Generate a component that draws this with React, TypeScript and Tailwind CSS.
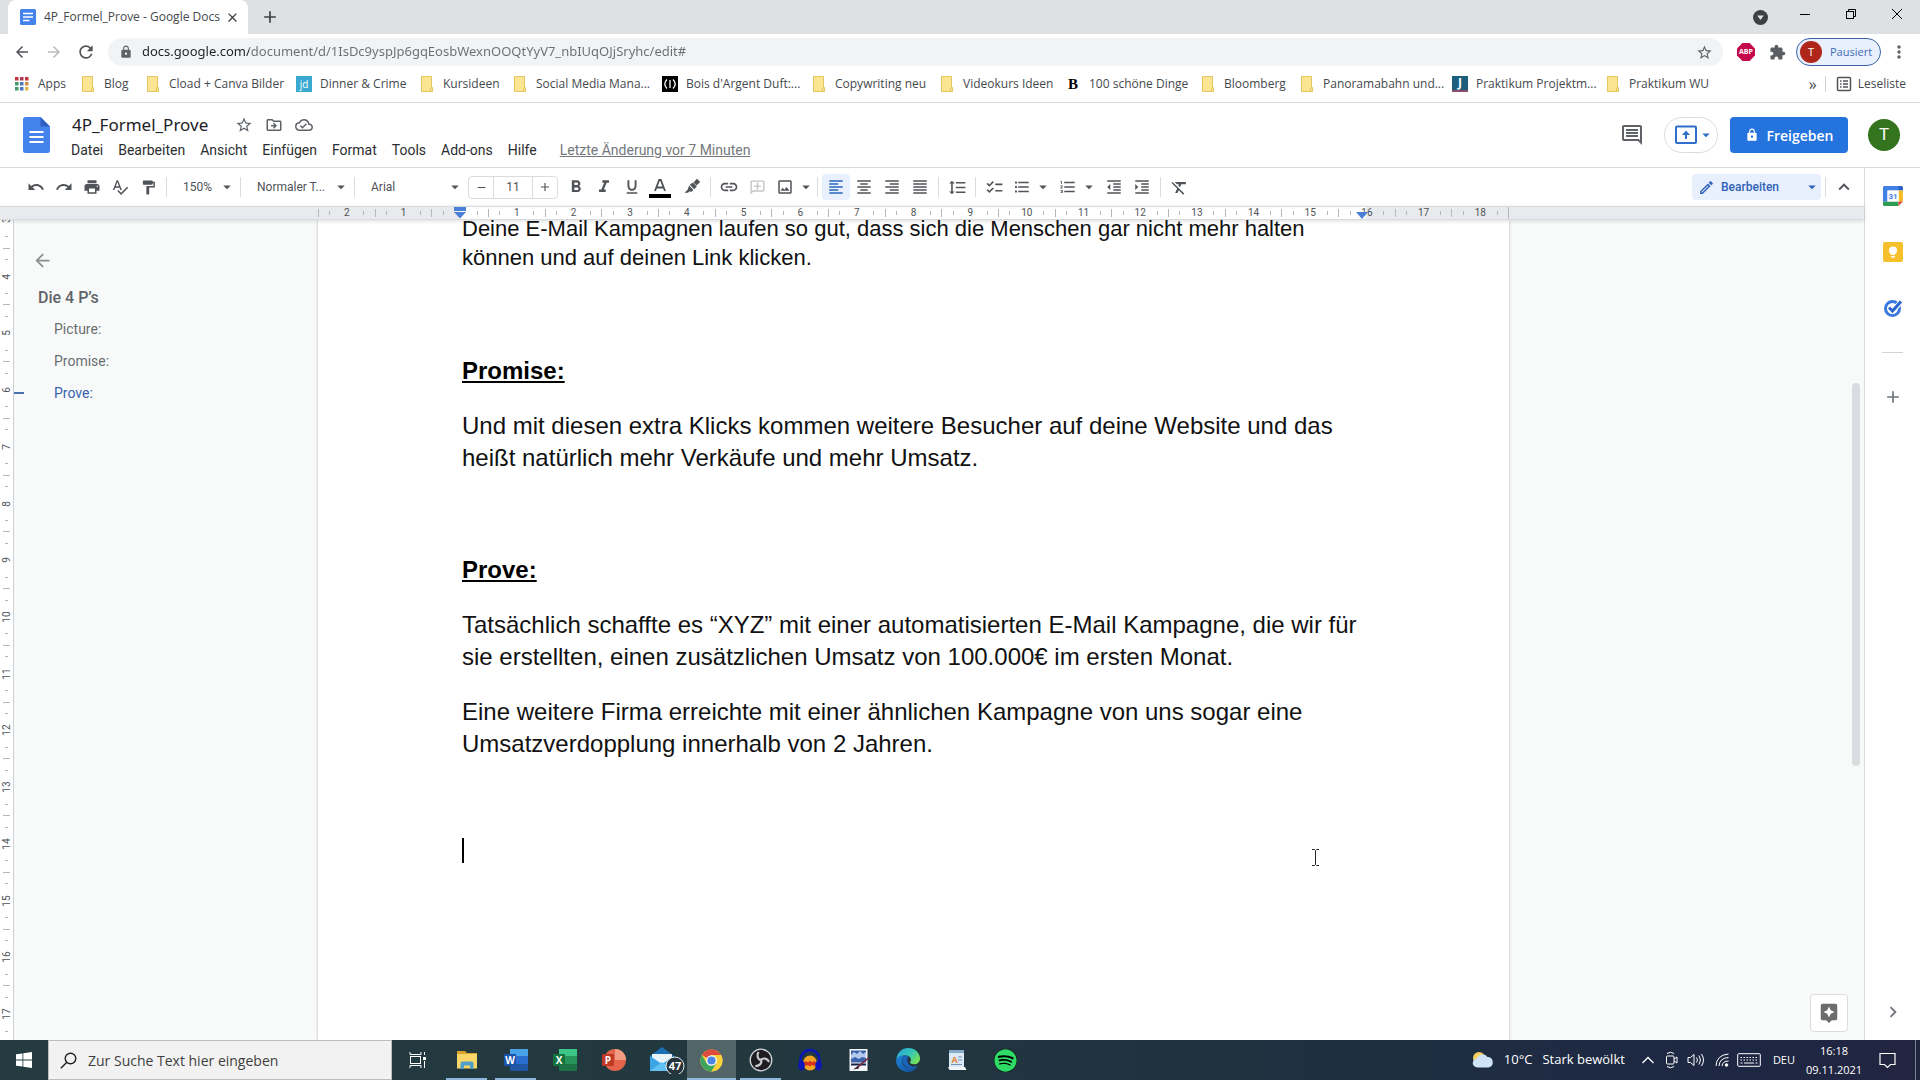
import React from "react";
import {
  MdAdd, MdArrowBack, MdArrowDropDown, MdArrowForward, MdAssistant, MdChecklist, MdChevronRight, MdClose,
  MdExtension, MdFormatAlignCenter, MdFormatAlignJustify, MdFormatAlignLeft, MdFormatAlignRight, MdFormatBold,
  MdFormatClear, MdFormatIndentDecrease, MdFormatIndentIncrease, MdFormatItalic, MdFormatLineSpacing,
  MdFormatListBulleted, MdFormatListNumbered, MdFormatPaint, MdFormatUnderlined, MdKeyboardArrowUp, MdLink,
  MdLock, MdMoreVert, MdOutlineAddComment, MdOutlineCloudDone, MdOutlineDriveFileMove, MdOutlineEdit,
  MdOutlineImage, MdOutlineInsertComment, MdPrint, MdRedo, MdRefresh, MdRemove, MdSpellcheck, MdStarBorder, MdUndo,
} from "react-icons/md";
import { FaSpotify } from "react-icons/fa";

type Kids = { children?: React.ReactNode };

/* ---------- browser frame ---------- */

function TabStrip() {
  return (
    <div className="flex h-[34px] shrink-0 items-stretch bg-[#dee1e4] pl-2">
      <div className="flex w-[240px] items-center rounded-t-lg bg-white pl-3 pr-2">
        <svg width="16" height="16" viewBox="0 0 16 16" className="mr-2 shrink-0">
          <rect width="16" height="16" rx="1.5" fill="#4583ec" />
          <path d="M3 4.5h10M3 8h10M3 11.5h6.500" stroke="#fff" strokeWidth="1.600" />
        </svg>
        <span className="flex-1 truncate text-[12px] text-[#45494d]">4P_Formel_Prove - Google Docs</span>
        <button aria-label="Tab schließen" className="text-[#3c4043]"><MdClose size={15} /></button>
      </div>
      <button aria-label="Neuer Tab" className="ml-3 text-[#3c4043]"><MdAdd size={20} /></button>
      <div className="ml-auto flex items-center pb-1.5 text-black">
        <button aria-label="Tabs suchen" className="flex w-11 justify-center pt-1.5">
          <svg width="15" height="15" viewBox="0 0 15 15"><circle cx="7.500" cy="7.500" r="7.500" fill="#3c4043" /><path d="M4.200 5.500h6.600L7.500 10z" fill="#dee1e4" /></svg>
        </button>
        <button aria-label="Minimieren" className="flex w-[46px] justify-center">
          <svg width="12" height="12" viewBox="0 0 12 12"><path d="M1 6.500h10" stroke="currentColor" /></svg>
        </button>
        <button aria-label="Verkleinern" className="flex w-[46px] justify-center">
          <svg width="12" height="12" viewBox="0 0 12 12" fill="none" stroke="currentColor"><rect x="1.500" y="3.500" width="7" height="7" /><path d="M3.500 3.500v-2h7v7h-2" /></svg>
        </button>
        <button aria-label="Schließen" className="flex w-[46px] justify-center">
          <svg width="12" height="12" viewBox="0 0 12 12" stroke="currentColor"><path d="M1 1l10 10M11 1L1 11" /></svg>
        </button>
      </div>
    </div>
  );
}

function AddressBar() {
  return (
    <div className="flex h-9 shrink-0 items-center bg-white pr-[11px] pl-1.5 text-[#5f6368]">
      <button aria-label="Zurück" className="flex w-8 justify-center text-[#505357]"><MdArrowBack size={18} /></button>
      <button aria-label="Vorwärts" className="flex w-8 justify-center text-[#b9bcbf]"><MdArrowForward size={18} /></button>
      <button aria-label="Neu laden" className="flex w-8 justify-center text-[#505357]"><MdRefresh size={20} /></button>
      <div className="ml-1.5 flex h-7 flex-1 items-center rounded-full bg-[#f1f3f4] px-2.5">
        <MdLock size={14} className="ml-px shrink-0" />
        <input
          aria-label="Adresse"
          readOnly
          value="docs.google.com/document/d/1IsDc9yspJp6gqEosbWexnOOQtYyV7_nbIUqOJjSryhc/edit#"
          className="ml-[9px] min-w-0 flex-1 bg-[linear-gradient(90deg,#202124_107px,#6a6e72_107px)] bg-clip-text font-['Noto_Sans',sans-serif] text-[13px] text-transparent outline-none"
        />
        <button aria-label="Lesezeichen setzen"><MdStarBorder size={17} /></button>
      </div>
      <button aria-label="Adblock Plus" className="ml-3.5 flex h-[18px] w-[18px] items-center justify-center bg-[#c4094c] text-[7px] font-bold text-white [clip-path:polygon(30%_0,70%_0,100%_30%,100%_70%,70%_100%,30%_100%,0_70%,0_30%)]">ABP</button>
      <button aria-label="Erweiterungen" className="ml-3.5 text-[#5b5f63]"><MdExtension size={17} /></button>
      <button className="ml-2.5 flex h-7 w-[85px] items-center gap-2 rounded-full border border-[#3b64a8] bg-[#e8f0fe] pl-[3px] text-[11px] text-[#3f6cb5]">
        <span className="flex h-[22px] w-[22px] items-center justify-center rounded-full bg-[#b0261a] text-[11px] text-white">T</span>
        Pausiert
      </button>
      <button aria-label="Menü" className="ml-2"><MdMoreVert size={20} /></button>
    </div>
  );
}

function Folder() {
  return (
    <svg width="16" height="16" viewBox="0 0 16 16">
      <path d="M2.500 0.500h10v11h1v4H2.500z" fill="#fbe592" stroke="#e3c75e" />
      <path d="M11.500 15.500v-2.500l1-1.500" fill="none" stroke="#e3c75e" />
    </svg>
  );
}

function AppsGrid() {
  const c = ["#c3323e", "#b03a52", "#c3323e", "#3f9c6a", "#4a79c9", "#d08a3c", "#3f9c6a", "#4a79c9", "#e0b94a"];
  return (
    <svg width="16" height="16" viewBox="0 0 16 16">
      {c.map((fill, i) => <rect key={i} x={1 + (i % 3) * 5} y={1 + Math.floor(i / 3) * 5} width="3.500" height="3.500" fill={fill} />)}
    </svg>
  );
}

const bookmarks: { label: string; w: string; icon: React.ReactNode }[] = [
  { label: "Apps", w: "w-[66px]", icon: <AppsGrid /> },
  { label: "Blog", w: "w-[65px]", icon: <Folder /> },
  { label: "Cload + Canva Bilder", w: "w-[151px]", icon: <Folder /> },
  { label: "Dinner & Crime", w: "w-[123px]", icon: <span className="flex h-4 w-4 items-center justify-center bg-[#3aa9cf] text-[10px] leading-none text-white">jd</span> },
  { label: "Kursideen", w: "w-[93px]", icon: <Folder /> },
  { label: "Social Media Mana...", w: "w-[150px]", icon: <Folder /> },
  {
    label: "Bois d'Argent Duft:...", w: "w-[149px]",
    icon: <svg width="16" height="16" viewBox="0 0 16 16"><rect width="16" height="16" fill="#000" /><path d="M5 3.500Q.5 8 5 12.500M11 3.500q4.500 4.500 0 9M8 4v8" stroke="#fff" fill="none" strokeWidth="1.300" /></svg>,
  },
  { label: "Copywriting neu", w: "w-[128px]", icon: <Folder /> },
  { label: "Videokurs Ideen", w: "w-[126px]", icon: <Folder /> },
  { label: "100 schöne Dinge", w: "w-[135px]", icon: <span className="w-4 text-center font-['Liberation_Serif',serif] text-[15px] leading-none font-bold text-black">B</span> },
  { label: "Bloomberg", w: "w-[99px]", icon: <Folder /> },
  { label: "Panoramabahn und...", w: "w-[153px]", icon: <Folder /> },
  { label: "Praktikum Projektm...", w: "w-[153px]", icon: <span className="flex h-4 w-4 items-center justify-center border-b-2 border-[#8a4a6c] bg-[#1b5f7d] text-[12px] leading-none font-bold text-white">J</span> },
  { label: "Praktikum WU", w: "w-[120px]", icon: <Folder /> },
];

function BookmarksBar() {
  return (
    <nav aria-label="Lesezeichen" className="flex h-[33px] shrink-0 items-center border-b border-[#d5d7da] bg-white px-3.5 pb-1 text-[12px] text-[#45494d]">
      {bookmarks.map((b) => (
        <a key={b.label} href="#" className={`flex shrink-0 items-center gap-2 whitespace-nowrap ${b.w}`}>
          <span className="flex w-4 shrink-0 items-center justify-center">{b.icon}</span>
          {b.label}
        </a>
      ))}
      <button aria-label="Weitere Lesezeichen" className="ml-auto text-[16px] leading-none">»</button>
      <span className="mr-2.5 ml-2 h-4 w-px bg-[#d0d3d6]" />
      <a href="#" className="flex items-center gap-1.5">
        <svg width="16" height="16" viewBox="0 0 16 16" fill="none" stroke="#505357" strokeWidth="1.500"><rect x="1.500" y="1.500" width="13" height="13" rx="1" /><path d="M4 5h1.500M4 8h1.500M4 11h1.500M7 5h5M7 8h5M7 11h5" /></svg>
        Leseliste
      </a>
    </nav>
  );
}

/* ---------- docs header ---------- */

const menus = ["Datei", "Bearbeiten", "Ansicht", "Einfügen", "Format", "Tools", "Add-ons", "Hilfe"];

function DocsHeader() {
  return (
    <header className="flex h-[65px] shrink-0 items-center border-b border-[#d9dbde] bg-white pr-5 pl-[23px] text-[#5f6368]">
      <a href="#" aria-label="Google Docs Startseite" className="mr-[21px] shrink-0">
        <svg width="27" height="36" viewBox="0 0 27 36">
          <path d="M2.500 0H17.500L27 9.500V33.500A2.500 2.500 0 0 1 24.500 36H2.500A2.500 2.500 0 0 1 0 33.500V2.500A2.500 2.500 0 0 1 2.500 0Z" fill="#4583ec" />
          <path d="M17.500 0L27 9.500H17.500Z" fill="#2d5fc0" />
          <path d="M6.500 15h14M6.500 20h14M6.500 25h14" stroke="#fff" strokeWidth="2" />
        </svg>
      </a>
      <div className="flex flex-col pt-1">
        <div className="flex h-[27px] items-center">
          <input aria-label="Dokumentname" defaultValue="4P_Formel_Prove" className="w-[164px] bg-transparent pl-px font-['Noto_Sans',sans-serif] text-[17px] leading-[26px] text-[#202124] outline-none" />
          <button aria-label="Markieren" className="flex w-[30px]"><MdStarBorder size={18} /></button>
          <button aria-label="Verschieben" className="flex w-[30px]"><MdOutlineDriveFileMove size={18} /></button>
          <button aria-label="Dokumentstatus"><MdOutlineCloudDone size={18} /></button>
        </div>
        <div className="flex h-6 items-center gap-[15px] font-[Roboto,sans-serif] text-[14px] whitespace-nowrap text-[#2b2e31]">
          {menus.map((m) => <button key={m}>{m}</button>)}
          <a href="#" className="ml-2 text-[#74787c] underline">Letzte Änderung vor 7 Minuten</a>
        </div>
      </div>
      <div className="ml-auto flex items-center">
        <button aria-label="Kommentare" className="mr-5"><MdOutlineInsertComment size={24} /></button>
        <button aria-label="Präsentieren" className="mr-3 flex h-9 w-[54px] items-center justify-center rounded-full border border-[#dadce0] pl-2 text-[#2f6fcb]">
          <svg width="22" height="20" viewBox="0 0 22 20" fill="none" stroke="currentColor" strokeWidth="2" className="shrink-0"><rect x="1" y="1.500" width="20" height="16.500" rx="1" /><path d="M11 14V7" /><path d="M7 10l4-4.500 4 4.500z" fill="currentColor" stroke="none" /></svg>
          <MdArrowDropDown size={18} />
        </button>
        <button className="mr-5 flex h-9 w-[118px] items-center justify-center gap-2 rounded bg-[#2574de] font-['Open_Sans',sans-serif] text-[14px] font-semibold text-white">
          <MdLock size={14} />Freigeben
        </button>
        <button aria-label="Google-Konto" className="flex h-8 w-8 items-center justify-center rounded-full bg-[#35741f] font-[Roboto,sans-serif] text-[17px] text-white">T</button>
      </div>
    </header>
  );
}

/* ---------- toolbar ---------- */

function Tool({ label, on, dim, children }: Kids & { label: string; on?: boolean; dim?: boolean }) {
  const tone = on ? "bg-[#e8f0fe] text-[#2a66bd]" : dim ? "text-[#c3c6c9]" : "";
  return <button aria-label={label} title={label} className={`flex h-[26px] w-7 items-center justify-center rounded-sm ${tone}`}>{children}</button>;
}

function Sep() {
  return <span className="mx-1 h-5 w-px shrink-0 bg-[#dadce0]" />;
}

function Drop({ label, value, w }: { label: string; value: string; w: string }) {
  return (
    <span className={`relative flex items-center ${w}`}>
      <select aria-label={label} className="w-full appearance-none bg-transparent pl-3 text-[12px] outline-none"><option>{value}</option></select>
      <MdArrowDropDown size={18} className="pointer-events-none absolute right-0" />
    </span>
  );
}

function More({ label }: { label: string }) {
  return <button aria-label={label} className="flex w-3.5 justify-center"><MdArrowDropDown size={18} className="shrink-0" /></button>;
}

function Toolbar() {
  return (
    <div role="toolbar" className="flex h-[38px] shrink-0 items-center bg-white pr-1.5 pl-[22px] font-[Roboto,sans-serif] text-[#505357]">
      <Tool label="Rückgängig"><MdUndo size={18} /></Tool>
      <Tool label="Wiederholen"><MdRedo size={18} /></Tool>
      <Tool label="Drucken"><MdPrint size={18} /></Tool>
      <Tool label="Rechtschreibprüfung"><MdSpellcheck size={18} /></Tool>
      <Tool label="Format übertragen"><MdFormatPaint size={17} /></Tool>
      <Sep />
      <Drop label="Zoom" value="150%" w="w-[65px]" />
      <Sep />
      <Drop label="Formatvorlage" value="Normaler T..." w="w-[105px]" />
      <Sep />
      <Drop label="Schriftart" value="Arial" w="w-[105px]" />
      <div className="mr-1 ml-1 flex h-[23px] w-[90px] items-stretch rounded-sm border border-[#dadce0]">
        <button aria-label="Schriftgröße verringern" className="flex w-6 items-center justify-center"><MdRemove size={13} /></button>
        <input aria-label="Schriftgröße" defaultValue="11" className="w-10 border-x border-[#dadce0] text-center text-[12px] outline-none" />
        <button aria-label="Schriftgröße erhöhen" className="flex w-6 items-center justify-center"><MdAdd size={14} /></button>
      </div>
      <Tool label="Fett"><MdFormatBold size={20} /></Tool>
      <Tool label="Kursiv"><MdFormatItalic size={20} /></Tool>
      <Tool label="Unterstrichen"><MdFormatUnderlined size={18} /></Tool>
      <Tool label="Textfarbe">
        <svg width="22" height="22" viewBox="0 0 22 22"><path d="M6 15L10.200 4h1.600L16 15M7.500 11.500h7" fill="none" stroke="currentColor" strokeWidth="1.800" /><rect x="0" y="18" width="22" height="4" fill="#000" /></svg>
      </Tool>
      <span className="w-1" />
      <Tool label="Markierungsfarbe">
        <svg width="18" height="18" viewBox="0 0 18 18" fill="currentColor"><path d="M10.500 4.500L14 .8l3.200 3.200-3.700 3.500z" /><path d="M9.800 4.500l4 4-2.600 2.800-4.500-4.500z" /><path d="M6 7.500l4.500 4.500-2 1.700-2.200-.2L5 14.800H1.500L4.800 11.500z" /></svg>
      </Tool>
      <Sep />
      <Tool label="Link einfügen"><MdLink size={20} /></Tool>
      <Tool label="Kommentar hinzufügen" dim><MdOutlineAddComment size={17} className="-scale-x-100" /></Tool>
      <Tool label="Bild einfügen"><MdOutlineImage size={18} /></Tool>
      <More label="Bildoptionen" />
      <Sep />
      <Tool label="Linksbündig" on><MdFormatAlignLeft size={18} /></Tool>
      <Tool label="Zentriert"><MdFormatAlignCenter size={18} /></Tool>
      <Tool label="Rechtsbündig"><MdFormatAlignRight size={18} /></Tool>
      <Tool label="Blocksatz"><MdFormatAlignJustify size={18} /></Tool>
      <Sep />
      <Tool label="Zeilenabstand"><MdFormatLineSpacing size={19} /></Tool>
      <Sep />
      <Tool label="Checkliste"><MdChecklist size={19} /></Tool>
      <Tool label="Aufzählung"><MdFormatListBulleted size={18} /></Tool>
      <More label="Aufzählungsoptionen" />
      <span className="w-1" />
      <Tool label="Nummerierung"><MdFormatListNumbered size={18} /></Tool>
      <More label="Nummerierungsoptionen" />
      <span className="w-1" />
      <Tool label="Einzug verkleinern"><MdFormatIndentDecrease size={18} /></Tool>
      <Tool label="Einzug vergrößern"><MdFormatIndentIncrease size={18} /></Tool>
      <Sep />
      <Tool label="Formatierung löschen"><MdFormatClear size={19} /></Tool>
      <label className="relative ml-auto flex h-[26px] w-[129px] items-center rounded bg-[#e8f0fe] text-[#2f62b8]">
        <MdOutlineEdit size={17} className="pointer-events-none absolute left-1.5" />
        <select aria-label="Modus" className="w-full appearance-none bg-transparent pl-[29px] text-[12px] font-medium outline-none"><option>Bearbeiten</option></select>
        <MdArrowDropDown size={18} className="pointer-events-none absolute right-0" />
      </label>
      <Sep />
      <button aria-label="Menüs ausblenden" className="flex w-7 justify-center"><MdKeyboardArrowUp size={22} /></button>
    </div>
  );
}

/* ---------- rulers ---------- */

const columns = ["2", "1", "", ...Array.from({ length: 18 }, (_, i) => String(i + 1))];
const rows = Array.from({ length: 15 }, (_, i) => String(i + 3));

function HorizontalRuler() {
  return (
    <div className="relative z-10 flex h-3.5 shrink-0 border-y border-[#d9dbde] bg-[#e8eaed] pl-[318px] font-[Roboto,sans-serif] text-[10px] text-[#505357] shadow-[0_1px_4px_rgba(0,0,0,0.14)]">
      <div className="flex w-[1191px] shrink-0 border-r border-[#b5b8bb] bg-[linear-gradient(90deg,transparent_142px,#fff_142px,#fff_1048px,transparent_1048px)]">
        {columns.map((c, i) => (
          <div key={i} className="relative flex flex-1 items-center justify-between">
            <span className="h-2 w-px bg-[#b5b8bb]" />
            <span className="h-1 w-px bg-[#b5b8bb]" />
            <span className="w-3 text-center leading-none">
              {c}
              {i === 2 && (
                <svg width="12" height="12" viewBox="0 0 12 12" className="block"><path d="M0 0h12v4H0zM0 5h12L6 11.500z" fill="#4a7fd8" /></svg>
              )}
            </span>
            <span className="h-1 w-px bg-[#b5b8bb]" />
            <span className="w-0" />
            {c === "16" && (
              <svg width="12" height="8" viewBox="0 0 12 8" className="absolute bottom-0 left-[18px]"><path d="M0 1h12L6 8z" fill="#4a7fd8" /></svg>
            )}
          </div>
        ))}
      </div>
    </div>
  );
}

function VerticalRuler() {
  return (
    <div className="w-3.5 shrink-0 overflow-hidden border-r border-[#cfd2d5] bg-white font-[Roboto,sans-serif] text-[10px] text-[#505357]">
      <div className="-mt-7 flex h-[851px] flex-col">
        {rows.map((r) => (
          <div key={r} className="flex flex-1 flex-col items-center justify-between">
            <span className="h-0" />
            <span className="h-px w-[3px] bg-[#b5b8bb]" />
            <span className="flex h-3 items-center justify-center leading-none"><span className="-rotate-90">{r}</span></span>
            <span className="h-px w-[3px] bg-[#b5b8bb]" />
            <span className="h-px w-[7px] bg-[#b5b8bb]" />
          </div>
        ))}
      </div>
    </div>
  );
}

/* ---------- document ---------- */

function Outline() {
  return (
    <nav aria-label="Gliederung" className="w-[304px] shrink-0 pt-[30px] font-[Roboto,sans-serif] text-[14px] text-[#6a6e72]">
      <button aria-label="Gliederung schließen" className="ml-[18px] block text-[#8b8e91]"><MdArrowBack size={21} /></button>
      <a href="#" className="mt-3 ml-6 block text-[16px] leading-[30px] font-medium text-[#5f6368]">Die 4 P’s</a>
      <a href="#" className="block pl-10 leading-8">Picture:</a>
      <a href="#" className="block pl-10 leading-8">Promise:</a>
      <a href="#" className="flex items-center leading-8 text-[#3a63b0]"><span className="mr-7.5 h-0.5 w-2.5 bg-[#4a73ae]" />Prove:</a>
    </nav>
  );
}

function Paper() {
  return (
    <article className="w-[1191px] shrink-0 bg-white pr-[142px] pl-36 font-['Liberation_Sans',Arial,sans-serif] text-[24px] leading-8 text-[#111] shadow-[0_0_3px_rgba(0,0,0,0.25)]">
      <p className="-mt-1.5 text-[22px] leading-[29px]">Deine E-Mail Kampagnen laufen so gut, dass sich die Menschen gar nicht mehr halten<br />können und auf deinen Link klicken.</p>
      <h2 className="mt-[83px] font-bold text-black underline">Promise:</h2>
      <p className="mt-[23px]">Und mit diesen extra Klicks kommen weitere Besucher auf deine Website und das<br />heißt natürlich mehr Verkäufe und mehr Umsatz.</p>
      <h2 className="mt-20 font-bold text-black underline">Prove:</h2>
      <p className="mt-[23px]">Tatsächlich schaffte es “XYZ” mit einer automatisierten E-Mail Kampagne, die wir für<br />sie erstellten, einen zusätzlichen Umsatz von 100.000€ im ersten Monat.</p>
      <p className="mt-[23px]">Eine weitere Firma erreichte mit einer ähnlichen Kampagne von uns sogar eine<br />Umsatzverdopplung innerhalb von 2 Jahren.</p>
      <div className="mt-[78px] h-[25px] w-0.5 bg-black" />
    </article>
  );
}

function Editor() {
  return (
    <div className="relative flex min-h-0 flex-1 overflow-hidden bg-[#f8faf9]">
      <VerticalRuler />
      <Outline />
      <Paper />
      <div className="absolute top-[163px] right-1 h-[383px] w-2 rounded-sm bg-[#dadce0]" />
      <button aria-label="Erkunden" className="absolute right-4 bottom-2 flex h-[38px] w-[38px] items-center justify-center rounded border border-[#dadce0] bg-white text-[#6a6c6e]"><MdAssistant size={22} /></button>
      <svg width="9" height="17" viewBox="0 0 9 17" fill="none" stroke="#222" className="absolute top-[629px] left-[1311px]"><path d="M1 .5h2.500l1 1 1-1H8M1 16.500h2.500l1-1 1 1H8M4.500 1.500v14" /></svg>
    </div>
  );
}

function SidePanel() {
  return (
    <aside className="flex w-14 shrink-0 flex-col items-center border-l border-[#dadce0] bg-white pt-[18px] pb-[17px] text-[#6f7377]">
      <button aria-label="Kalender">
        <svg width="20" height="20" viewBox="0 0 20 20">
          <path d="M1.500 0H16v4.500H4.500V15.500H0V1.500A1.500 1.500 0 0 1 1.500 0Z" fill="#3f7fe6" />
          <path d="M15.500 0h3A1.500 1.500 0 0 1 20 1.500V4.500h-4.500z" fill="#2a61c4" />
          <path d="M15.500 4.500H20v11h-4.500z" fill="#f7bb2b" />
          <path d="M0 15.500h15.500V20h-14A1.500 1.500 0 0 1 0 18.500z" fill="#2f9a54" />
          <path d="M15.500 15.500H20L15.500 20z" fill="#df4638" />
          <path d="M4.500 4.500h11v11h-11z" fill="#fff" />
          <text x="10" y="13" fontSize="8" fontWeight="700" fontFamily="Roboto, sans-serif" textAnchor="middle" fill="#3f7fe6">31</text>
        </svg>
      </button>
      <button aria-label="Notizen" className="mt-9">
        <svg width="20" height="20" viewBox="0 0 20 20"><rect width="20" height="20" rx="2" fill="#f6c02c" /><circle cx="10" cy="8.500" r="4" fill="#fff" /><path d="M8 11h4v2H8zM8 14h4v1.600H8z" fill="#fff" /></svg>
      </button>
      <button aria-label="Aufgaben" className="mt-9">
        <svg width="20" height="20" viewBox="0 0 20 20" fill="none"><circle cx="9.500" cy="10.500" r="7" stroke="#3a7ae0" strokeWidth="3" /><path d="M6 9.500l3.500 3.500 8.500-9" stroke="#fff" strokeWidth="5" /><path d="M6 9.500l3.500 3.500 8.500-9.500" stroke="#2b66d0" strokeWidth="3" /></svg>
      </button>
      <span className="mt-[34px] h-px w-[21px] bg-[#d0d3d6]" />
      <button aria-label="Add-ons abrufen" className="mt-[34px]"><MdAdd size={20} /></button>
      <button aria-label="Seitenleiste ausblenden" className="mt-auto"><MdChevronRight size={22} /></button>
    </aside>
  );
}

/* ---------- taskbar ---------- */

function OfficeIcon({ letter, back, mid, tile, round }: { letter: string; back: string; mid: string; tile: string; round?: boolean }) {
  return (
    <svg width="24" height="24" viewBox="0 0 24 24">
      {round ? (
        <><circle cx="13" cy="12" r="11" fill={back} /><path d="M13 1a11 11 0 0 1 11 11H13z" fill={mid} /></>
      ) : (
        <><rect x="6" y="1" width="18" height="22" rx="1.500" fill={back} /><path d="M6 1h18v7H6z" fill={mid} /><path d="M6 16h18v5.500A1.500 1.500 0 0 1 22.500 23H6z" fill="#000" opacity="0.22" /></>
      )}
      <rect y="6" width="12" height="12" rx="1" fill={tile} />
      <text x="6" y="15.500" fontSize="10" fontWeight="700" fontFamily="Open Sans, sans-serif" textAnchor="middle" fill="#fff">{letter}</text>
    </svg>
  );
}

const ExplorerIcon = () => (
  <svg width="22" height="20" viewBox="0 0 22 20">
    <path d="M1 1h8l2 2h10v4H1z" fill="#d9a32c" /><path d="M1 4h20v14.500H1z" fill="#f8d667" />
    <path d="M4.500 19v-5.500A2 2 0 0 1 6.500 11.500h9a2 2 0 0 1 2 2V19H14v-3.500H8V19z" fill="#4f9fc8" />
  </svg>
);

const MailIcon = () => (
  <svg width="36" height="28" viewBox="0 0 36 28">
    <path d="M1 10L13 1l12 9v3H1z" fill="#1b6fb5" /><path d="M3 8h20v9H3z" fill="#e9f3fa" />
    <path d="M1 10l12 8 12-8v15H1z" fill="#3aa5e4" /><path d="M1 25L13 16l12 9z" fill="#62c1f2" />
    <circle cx="26" cy="20" r="9" fill="#25333a" stroke="#e8eeee" />
    <text x="26" y="24" fontSize="11" fontWeight="700" fontFamily="Open Sans, sans-serif" textAnchor="middle" fill="#fff">47</text>
  </svg>
);

const ChromeIcon = () => (
  <svg width="23" height="23" viewBox="0 0 24 24">
    <circle cx="12" cy="12" r="11.500" fill="#f8cf3d" />
    <path d="M12 12L2 6.300A11.500 11.500 0 0 1 22 6.300H12z" fill="#dd4b3e" />
    <path d="M2 6.300A11.500 11.500 0 0 0 12 23.500L17 15 7 15z" fill="#3ba55c" />
    <path d="M17.200 15L12 23.500A11.500 11.500 0 0 0 22 6.300H12z" fill="#f8cf3d" />
    <circle cx="12" cy="12" r="5.600" fill="#fff" /><circle cx="12" cy="12" r="4.300" fill="#4a86e8" />
  </svg>
);

const ObsIcon = () => (
  <svg width="24" height="24" viewBox="0 0 24 24">
    <circle cx="12" cy="12" r="10.800" fill="#1d1c20" stroke="#d4d6d8" strokeWidth="1.300" />
    {[0, 120, 240].map((a) => (
      <path key={a} transform={`rotate(${a} 12 12)`} d="M12 12.500C8.500 11 7.500 7.500 9.500 4" fill="none" stroke="#c9cccf" strokeWidth="2.200" />
    ))}
  </svg>
);

const AudacityIcon = () => (
  <svg width="26" height="24" viewBox="0 0 26 24">
    <ellipse cx="13" cy="15" rx="7" ry="7.500" fill="#f2a422" /><path d="M6 15l3-2 2 1.500 2-2 2 2 2-1.500 3 2-3 3-2-1-2 1.500-2-1.500-2 1z" fill="#d8321c" />
    <path d="M3.500 17V12a9.500 10 0 0 1 19 0v5" fill="none" stroke="#0d16b8" strokeWidth="2.500" />
    <ellipse cx="4.500" cy="17.500" rx="3.300" ry="5" fill="#0d16b8" /><ellipse cx="21.500" cy="17.500" rx="3.300" ry="5" fill="#0d16b8" />
  </svg>
);

const PaintIcon = () => (
  <svg width="20" height="24" viewBox="0 0 20 24">
    <rect x="0.500" y="1" width="18" height="22" fill="#f4f6fa" /><rect x="2" y="2.500" width="15" height="12" fill="#3c62ad" />
    <path d="M2 7l3-3 3 2 3-3 3 3 3-2v6l-4-1-3 2-4-2-4 2z" fill="#b4c9ec" /><path d="M2 15.500h15v2H2z" fill="#18264f" />
    <path d="M5 21l4-1L20 10.500l-1-1z" fill="#7c2a3d" /><path d="M4 21.500l5-3 1 2z" fill="#1b1b2b" />
  </svg>
);

const EdgeIcon = () => (
  <svg width="24" height="24" viewBox="0 0 24 24">
    <defs>
      <linearGradient id="edge-top" x1="0" y1="0" x2="1" y2="0.600"><stop offset="0" stopColor="#2aa3e0" /><stop offset="0.600" stopColor="#35c7b4" /><stop offset="1" stopColor="#74e05a" /></linearGradient>
      <linearGradient id="edge-low" x1="0" y1="0" x2="1" y2="1"><stop offset="0" stopColor="#1f86d8" /><stop offset="1" stopColor="#124a94" /></linearGradient>
    </defs>
    <path d="M.3 11.500C1 4.500 6 0 12.200 0 19 0 24 5 24 10.500c0 3.500-2.700 5.800-6 5.800-2.500 0-4-1-4-2 0-.7.900-1 .9-2.600 0-2-2-4.200-5.400-4.200C5 7.500 1.500 9.500.3 11.500z" fill="url(#edge-top)" />
    <path d="M.2 12C.8 9 4.500 7 8.500 7.500 6.500 9 5.800 11 6 13.500c.4 4.500 5 7 9.500 6.700 2.500-.1 4.500-1 6.200-2C19.500 21.800 16 24 12 24 5 24-.5 18.500.2 12z" fill="url(#edge-low)" />
    <path d="M8.500 7.500c-2.500 1.500-3 5-1.500 8 2 4 7 5.700 11 4.500 1.500-.4 3-1.200 3.700-1.800-1 .3-5 1-7.700-.8C11 15.500 10.500 11 12.500 8.500 11.500 7.700 10 7.300 8.500 7.500z" fill="#1a63b8" />
  </svg>
);

const WordpadIcon = () => (
  <svg width="20" height="22" viewBox="0 0 20 22">
    <path d="M2 1h15v17H2z" fill="#dbe9f5" /><path d="M2 1h15v3H2z" fill="#86a9c9" />
    <text x="7.500" y="13.500" fontSize="9" fontWeight="700" fontFamily="Open Sans, sans-serif" textAnchor="middle" fill="#e2843a">A</text>
    <path d="M11 8h4M11 11h4M4 15.500h11" stroke="#6f93b5" /><path d="M1 18h17l1.500 3H2.500z" fill="#f3f6f9" />
  </svg>
);

const apps: { label: string; icon: React.ReactNode; state?: "open" | "active" }[] = [
  { label: "Explorer", icon: <ExplorerIcon />, state: "open" },
  { label: "Word", icon: <OfficeIcon letter="W" back="#2a6fd0" mid="#4aa3e8" tile="#1b52ac" />, state: "open" },
  { label: "Excel", icon: <OfficeIcon letter="X" back="#26935a" mid="#3cc585" tile="#14733e" /> },
  { label: "PowerPoint", icon: <OfficeIcon letter="P" back="#e4644c" mid="#f39a83" tile="#be3a25" round /> },
  { label: "Mail", icon: <span className="pl-2"><MailIcon /></span> },
  { label: "Chrome", icon: <ChromeIcon />, state: "active" },
  { label: "OBS", icon: <ObsIcon />, state: "open" },
  { label: "Audacity", icon: <AudacityIcon /> },
  { label: "Bildbearbeitung", icon: <PaintIcon /> },
  { label: "Edge", icon: <EdgeIcon /> },
  { label: "WordPad", icon: <WordpadIcon /> },
  { label: "Spotify", icon: <span className="rounded-full bg-black text-[#2ddb66]"><FaSpotify size={23} /></span> },
];

function Taskbar() {
  return (
    <footer className="flex h-10 shrink-0 items-stretch bg-[linear-gradient(90deg,#243b40,#22383f_40%,#1f2f40_70%,#1d2743_90%,#222540)] text-white">
      <button aria-label="Start" className="flex w-12 items-center justify-center">
        <svg width="16" height="16" viewBox="0 0 16 16" fill="#fff"><path d="M0 2.300L6.500 1.400V7.600H0zM7.300 1.300L16 0V7.600H7.300zM0 8.400H6.500V14.600L0 13.700zM7.300 8.400H16V16L7.300 14.700z" /></svg>
      </button>
      <label className="flex w-[344px] items-center border border-[#b9bdbe] bg-[#f2f2f2] pl-[11px] text-[#333]">
        <svg width="17" height="17" viewBox="0 0 17 17" fill="none" stroke="#222" strokeWidth="1.400"><circle cx="10.500" cy="6.500" r="5.300" /><path d="M6.800 10.300L.8 16.300" /></svg>
        <input type="search" aria-label="Suche" placeholder="Zur Suche Text hier eingeben" className="ml-[11px] min-w-0 flex-1 bg-transparent text-[14px] outline-none placeholder:text-[#3f3f3f]" />
      </label>
      <button aria-label="Aktive Anwendungen" className="flex w-[50px] items-center justify-center">
        <svg width="17" height="16" viewBox="0 0 17 16" fill="none" stroke="#fff"><path d="M1 0v2.500h11V0M1 16v-2.500h11V16" /><rect x="1.500" y="4.500" width="10" height="7" /><path d="M15.500 0v3M15.500 9v7" /><path d="M14 5h3v3h-3z" fill="#fff" stroke="none" /></svg>
      </button>
      {apps.map((a) => (
        <button key={a.label} aria-label={a.label} className={`relative flex w-[49px] items-center justify-center ${a.state === "active" ? "bg-[#52666a]" : ""}`}>
          {a.icon}
          {a.state && <span className={`absolute bottom-0 h-0.5 bg-[#8db7dc] ${a.state === "active" ? "inset-x-0" : "inset-x-1"}`} />}
        </button>
      ))}
      <div className="ml-auto flex items-center">
        <button className="flex items-center text-[13px] whitespace-nowrap">
          <svg width="22" height="18" viewBox="0 0 22 18" className="mr-2.5"><circle cx="7" cy="7" r="6" fill="#f5cf62" /><path d="M5.500 16.500a4.500 4.500 0 0 1-.5-9 6 6 0 0 1 10.500-1.500 5.300 5.300 0 0 1 1 10.500z" fill="#cfe3f6" /></svg>
          10°C<span className="ml-2.5">Stark bewölkt</span>
        </button>
        <button aria-label="Ausgeblendete Symbole" className="ml-4"><svg width="14" height="14" viewBox="0 0 14 14" fill="none" stroke="#fff" strokeWidth="1.300"><path d="M1.500 10L7 4.500 12.500 10" /></svg></button>
        <button aria-label="Kamera" className="ml-2.5"><svg width="14" height="18" viewBox="0 0 14 18" fill="none" stroke="#fff"><rect x="1.500" y="5" width="7.500" height="8" rx="1" /><path d="M9 8l3-2v6l-3-2M2 2.500Q5.500 0 9 2.500M2 15.500q3.500 2.500 7 0" /></svg></button>
        <button aria-label="Lautstärke" className="ml-2"><svg width="18" height="16" viewBox="0 0 18 16" fill="none" stroke="#fff"><path d="M1 5.500h2.500L7 2.500v11L3.500 10.500H1zM9.500 5.500q2 2.500 0 5M12 3.500q3 4.500 0 9M14.500 2q4 6 0 12" /></svg></button>
        <button aria-label="WLAN" className="ml-2.5"><svg width="14" height="14" viewBox="0 0 14 14" fill="none" stroke="#fff"><path d="M1 13Q1.500 2 13.500 1M4 13Q4.500 5 13.500 4.500M7 13q.5-5 6.500-5" /><circle cx="11.500" cy="12" r="1.300" fill="#fff" /></svg></button>
        <button aria-label="Bildschirmtastatur" className="ml-2"><svg width="24" height="14" viewBox="0 0 24 14" fill="none" stroke="#fff"><rect x="0.700" y="0.700" width="22.600" height="12.600" rx="1" /><path d="M3.500 4.500h17M3.500 7h17" strokeDasharray="1.500 1.500" /><path d="M3.500 10h2M7 10h10M18.500 10h2" /></svg></button>
        <button className="ml-3 text-[11px]">DEU</button>
        <div className="ml-3 flex w-[54px] flex-col items-center text-[11px] leading-[19px]"><time>16:18</time><time>09.11.2021</time></div>
        <button aria-label="Benachrichtigungen" className="ml-[18px]"><svg width="17" height="17" viewBox="0 0 17 17" fill="none" stroke="#fff" strokeWidth="1.200"><path d="M1 1.500h15v11h-4.500L8.500 15.500 5.500 12.500H1z" /></svg></button>
        <span className="mr-1 ml-[19px] h-10 w-px bg-[#7b8398]" />
      </div>
    </footer>
  );
}

export default function App() {
  return (
    <div className="flex h-screen flex-col overflow-hidden font-['Open_Sans',sans-serif]">
      <TabStrip />
      <AddressBar />
      <BookmarksBar />
      <DocsHeader />
      <div className="flex min-h-0 flex-1">
        <main className="flex min-w-0 flex-1 flex-col">
          <Toolbar />
          <HorizontalRuler />
          <Editor />
        </main>
        <SidePanel />
      </div>
      <Taskbar />
    </div>
  );
}
